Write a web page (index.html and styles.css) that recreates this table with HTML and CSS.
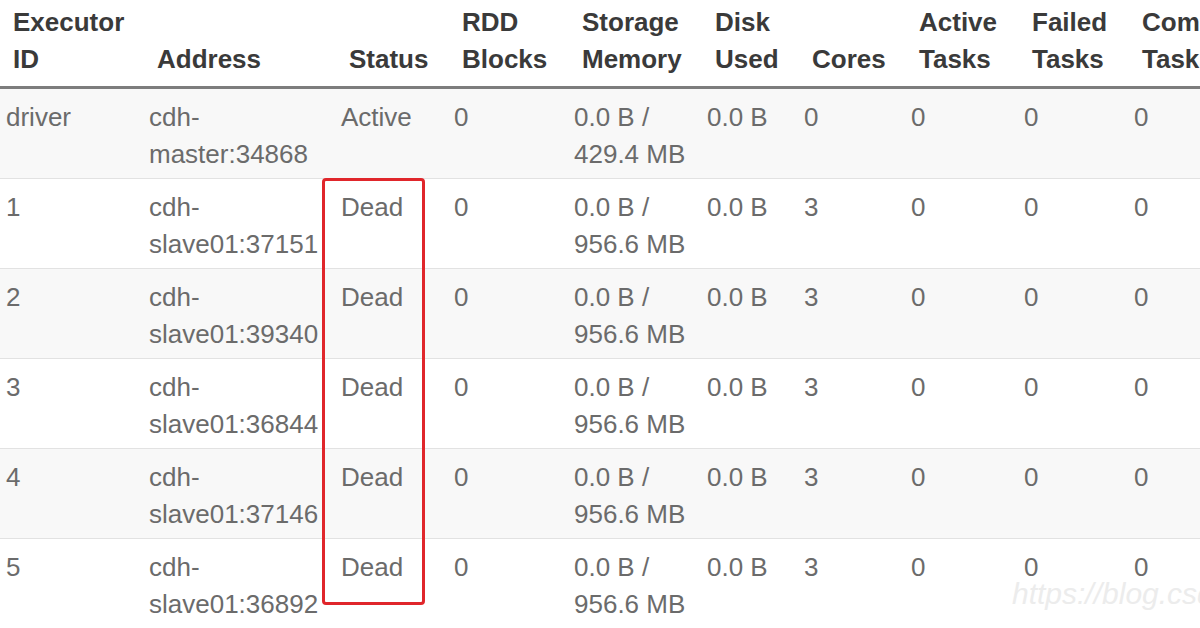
FILE: index.html
```html
<!DOCTYPE html>
<html lang="en">
  <head>
    <meta charset="UTF-8" />
    <title>Executors</title>
    <link rel="stylesheet" href="styles.css">
  </head>
  <body>
    <div class="executors-wrapper">
      <table class="executors-table">
        <colgroup>
          <col class="col-id">
          <col class="col-address">
          <col class="col-status">
          <col class="col-rdd">
          <col class="col-storage">
          <col class="col-disk">
          <col class="col-cores">
          <col class="col-active">
          <col class="col-failed">
          <col class="col-complete">
        </colgroup>
        <thead>
          <tr>
            <th>Executor<br>ID</th>
            <th><br>Address</th>
            <th><br>Status</th>
            <th>RDD<br>Blocks</th>
            <th>Storage<br>Memory</th>
            <th>Disk<br>Used</th>
            <th><br>Cores</th>
            <th>Active<br>Tasks</th>
            <th>Failed<br>Tasks</th>
            <th>Complete<br>Tasks</th>
          </tr>
        </thead>
        <tbody>
          <tr>
            <td>driver</td>
            <td>cdh-<br>master:34868</td>
            <td>Active</td>
            <td>0</td>
            <td>0.0 B /<br>429.4 MB</td>
            <td>0.0 B</td>
            <td>0</td>
            <td>0</td>
            <td>0</td>
            <td>0</td>
          </tr>
          <tr>
            <td>1</td>
            <td>cdh-<br>slave01:37151</td>
            <td>Dead</td>
            <td>0</td>
            <td>0.0 B /<br>956.6 MB</td>
            <td>0.0 B</td>
            <td>3</td>
            <td>0</td>
            <td>0</td>
            <td>0</td>
          </tr>
          <tr>
            <td>2</td>
            <td>cdh-<br>slave01:39340</td>
            <td>Dead</td>
            <td>0</td>
            <td>0.0 B /<br>956.6 MB</td>
            <td>0.0 B</td>
            <td>3</td>
            <td>0</td>
            <td>0</td>
            <td>0</td>
          </tr>
          <tr>
            <td>3</td>
            <td>cdh-<br>slave01:36844</td>
            <td>Dead</td>
            <td>0</td>
            <td>0.0 B /<br>956.6 MB</td>
            <td>0.0 B</td>
            <td>3</td>
            <td>0</td>
            <td>0</td>
            <td>0</td>
          </tr>
          <tr>
            <td>4</td>
            <td>cdh-<br>slave01:37146</td>
            <td>Dead</td>
            <td>0</td>
            <td>0.0 B /<br>956.6 MB</td>
            <td>0.0 B</td>
            <td>3</td>
            <td>0</td>
            <td>0</td>
            <td>0</td>
          </tr>
          <tr>
            <td>5</td>
            <td>cdh-<br>slave01:36892</td>
            <td>Dead</td>
            <td>0</td>
            <td>0.0 B /<br>956.6 MB</td>
            <td>0.0 B</td>
            <td>3</td>
            <td>0</td>
            <td>0</td>
            <td>0</td>
          </tr>
        </tbody>
      </table>
      <div class="highlight-box"></div>
      <div class="watermark">https://blog.csdn.net</div>
    </div>
  </body>
</html>
```

FILE: styles.css
```css
body {
  margin: 0;
  background-color: #fff;
  font-family: "Liberation Sans", Arial, sans-serif;
  overflow: hidden;
}

.executors-wrapper {
  position: relative;
  width: 1200px;
  height: 628px;
  overflow: hidden;
}

.executors-table {
  width: 1250px;
  table-layout: fixed;
  border-collapse: collapse;
  font-size: 26px;
  line-height: 37px;
}

.col-id { width: 143px; }
.col-address { width: 192px; }
.col-status { width: 113px; }
.col-rdd { width: 120px; }
.col-storage { width: 133px; }
.col-disk { width: 97px; }
.col-cores { width: 107px; }
.col-active { width: 113px; }
.col-failed { width: 110px; }
.col-complete { width: 122px; }

.executors-table th {
  padding: 4px 0 8px 14px;
  text-align: left;
  vertical-align: bottom;
  font-weight: 700;
  color: #3a3a3a;
  border-bottom: 3px solid #7d7d7d;
  white-space: nowrap;
}

.executors-table th:first-child {
  padding-left: 13px;
}

.executors-table td {
  padding: 10px 0 5px 6px;
  vertical-align: top;
  color: #6b6b6b;
  white-space: nowrap;
  border-top: 1px solid #e2e2e2;
}

.executors-table tbody tr:first-child td {
  border-top: none;
}

.executors-table tbody tr:nth-child(odd) {
  background-color: #f8f8f8;
}

.highlight-box {
  position: absolute;
  left: 322px;
  top: 178px;
  width: 97px;
  height: 421px;
  border: 3px solid #e0262b;
  border-radius: 4px;
}

.watermark {
  position: absolute;
  left: 1012px;
  top: 577px;
  font-size: 30px;
  font-style: italic;
  color: #ececec;
  white-space: nowrap;
}
```
